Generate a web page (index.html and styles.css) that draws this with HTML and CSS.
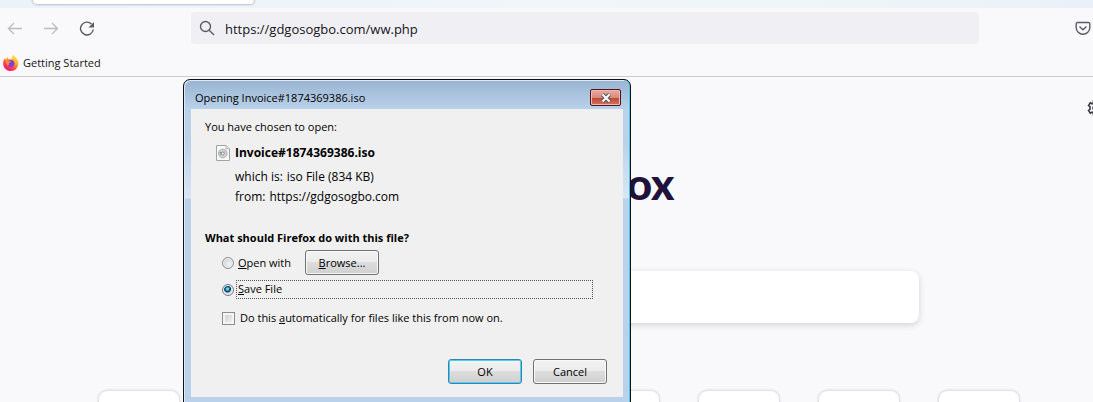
FILE: index.html
```html
<!DOCTYPE html>
<html lang="en">
<head>
<meta charset="utf-8">
<title>Opening file</title>
<link rel="stylesheet" href="styles.css">
</head>
<body>
<header class="chrome">
  <div class="tabstrip"><div class="tab"></div></div>
  <div class="navbar">
    <div class="nav-buttons">
      <button class="icon-button" aria-label="Back" disabled><svg width="16" height="16" viewBox="0 0 16 16"><path d="M15 8.500H1.500M7 3L1.500 8.500L7 14"/></svg></button>
      <button class="icon-button" aria-label="Forward" disabled><svg width="16" height="16" viewBox="0 0 16 16"><path d="M1 8.500h13.500M9 3L14.500 8.500L9 14"/></svg></button>
      <button class="icon-button" aria-label="Reload"><svg width="16" height="16" viewBox="0 0 16 16"><path d="M12.500 4A6.400 6.400 0 1 0 14.300 9.500"/><path class="solid" d="M15 2v5.500H9.500z"/></svg></button>
    </div>
    <div class="urlbar">
      <svg width="16" height="16" viewBox="0 0 16 16"><circle cx="6.500" cy="6.500" r="5"/><path d="M10.200 10.200L15 15"/></svg>
      <input class="url" type="text" aria-label="Address" value="https://gdgosogbo.com/ww.php">
    </div>
    <button class="icon-button pocket" aria-label="Save to Pocket"><svg width="16" height="16" viewBox="0 0 16 16"><path d="M2.500 2.500h11a1.300 1.300 0 0 1 1.300 1.300V7.500A6.800 6.800 0 0 1 1.200 7.500V3.800A1.300 1.300 0 0 1 2.500 2.500zM4.500 6.500L8 9.700L11.500 6.500"/></svg></button>
  </div>
  <nav class="bookmarks">
    <a class="bookmark" href="#start">
      <svg width="16" height="16" viewBox="0 0 16 16">
        <defs>
          <linearGradient id="flame" x1=".8" y1="0" x2=".2" y2="1"><stop offset="0" stop-color="#fff44f"/><stop offset=".4" stop-color="#ffa02e"/><stop offset=".7" stop-color="#ff3750"/><stop offset="1" stop-color="#e31587"/></linearGradient>
          <radialGradient id="globe"><stop offset="0" stop-color="#5a4de0"/><stop offset="1" stop-color="#9a35c8"/></radialGradient>
        </defs>
        <path fill="url(#flame)" d="M10.500 0c.8 1.500 2.500 2 3.700 4 3 5.500-.5 12-6.300 12C3 16-.3 12 .2 7.500.4 5.500 1 4.300 2 3.200l.6 1.600L4.500 2l.8 2.200c2-.4 2.800-.4 3.600.1C8.900 2.500 9.300 1 10.500 0z"/>
        <circle cx="8" cy="8.500" r="3.400" fill="url(#globe)"/>
        <path fill="#ff8a2b" d="M3 5.500c1.500-.6 2.600-.2 3.200.6l2 .2c-.3 1-1.200 1.300-2.200 1.600.2 1.500-.5 2.300-1.500 2.600C3.300 9 2.700 7 3 5.500z"/>
      </svg>
      <span>Getting Started</span>
    </a>
  </nav>
</header>

<main class="newtab">
  <button class="settings" aria-label="Personalize"><svg width="16" height="16" viewBox="0 0 16 16"><path d="M6.500 1h3v2l1.500.8 1.700-1L14.500 5.500 13 6.700v2.600l1.500 1.200-1.800 2.700-1.700-1-1.500.8v2h-3v-2L5 12.200l-1.700 1-1.800-2.700L3 9.300V6.700L1.500 5.500l1.800-2.700 1.700 1L6.500 3z"/><circle cx="8" cy="8" r="2"/></svg></button>
  <div class="wordmark">Firefox</div>
  <input class="search" type="text" aria-label="Search the web">
  <div class="tiles">
    <a class="tile" href="#t1" aria-label="Site 1"></a>
    <a class="tile" href="#t2" aria-label="Site 2"></a>
    <a class="tile" href="#t3" aria-label="Site 3"></a>
    <a class="tile" href="#t4" aria-label="Site 4"></a>
    <a class="tile" href="#t5" aria-label="Site 5"></a>
    <a class="tile" href="#t6" aria-label="Site 6"></a>
    <a class="tile" href="#t7" aria-label="Site 7"></a>
    <a class="tile" href="#t8" aria-label="Site 8"></a>
  </div>
</main>

<section class="dialog" role="dialog" aria-labelledby="dialog-title">
  <div class="titlebar">
    <span id="dialog-title">Opening Invoice#1874369386.iso</span>
    <button class="close" aria-label="Close"><svg width="12" height="10" viewBox="0 0 12 10"><path class="edge" d="M2.500 1.500L9.500 8.500M9.500 1.500L2.500 8.500"/><path class="cross" d="M2.500 1.500L9.500 8.500M9.500 1.500L2.500 8.500"/></svg></button>
  </div>
  <form class="panel">
    <p class="line">You have chosen to open:</p>
    <div class="file">
      <svg width="14" height="16" viewBox="0 0 14 16"><path d="M.5.500h9.500l3.500 3.500v11.500H.5z" fill="#fafafa" stroke="#a3a3a3"/><path d="M10 .500v3.500h3.500" fill="#e4e4e4" stroke="#b5b5b5"/><circle cx="6.800" cy="8.500" r="4.300" fill="#d3d5d8" stroke="#aaa"/><path d="M3.500 6.500l2.500 1-1.500 3z" fill="#69ad78"/><path d="M8 5l2.500 2-2.500 1z" fill="#d4bad6"/><circle cx="6.800" cy="8.500" r="1.500" fill="#fff" stroke="#858585"/></svg>
      <strong>Invoice#1874369386.iso</strong>
    </div>
    <dl class="details">
      <div class="detail"><dt>which is:</dt><dd>iso File (834 KB)</dd></div>
      <div class="detail"><dt>from:</dt><dd>https://gdgosogbo.com</dd></div>
    </dl>
    <p class="question">What should Firefox do with this file?</p>
    <div class="choice open">
      <input class="radio" type="radio" name="action" id="open"><label class="open-label" for="open"><u>O</u>pen with</label>
      <button class="button" type="button"><span><u>B</u>rowse...</span></button>
    </div>
    <div class="choice save">
      <input class="radio" type="radio" name="action" id="save" checked><label class="focused" for="save"><u>S</u>ave File</label>
    </div>
    <div class="choice always">
      <input class="check" type="checkbox" id="always"><label for="always">Do this <u>a</u>utomatically for files like this from now on.</label>
    </div>
    <div class="actions">
      <button class="button default" type="button">OK</button>
      <button class="button" type="button">Cancel</button>
    </div>
  </form>
</section>
</body>
</html>
```
FILE: styles.css
```css
* { box-sizing: border-box; }
html { overflow: hidden; }
body {
  margin: 0;
  height: 100vh;
  overflow: hidden;
  background: #f9f9fb;
  color: #000;
  font: 11px/16px "Open Sans", "Noto Sans", sans-serif;
}
button { font: inherit; color: inherit; }
svg { display: block; flex: none; }
p, dl, dd { margin: 0; }

.chrome { border-bottom: 1px solid #ccccce; color: #15141a; }
.tabstrip { height: 8px; padding-left: 33px; background: linear-gradient(90deg, #eaf2fa, #f0f6fa 50%, #eef5f9 80%, #e9f0f9); }
.tab { width: 221px; height: 4px; background: #fff; border-radius: 0 0 4px 4px; box-shadow: 0 0 2px 1px #b9bfce; }
.navbar { display: flex; align-items: center; height: 40px; padding: 0 2px 0 7px; }
.nav-buttons { display: flex; gap: 20px; width: 184px; }
.icon-button { padding: 0; border: 0; background: none; }
.icon-button svg, .urlbar svg, .settings svg { fill: none; stroke: #5b5b66; stroke-width: 1.4; }
.icon-button:disabled svg { stroke: #bdbdc3; }
.icon-button .solid { fill: #5b5b66; stroke: none; }
.urlbar { flex: 1; display: flex; align-items: center; gap: 10px; height: 32px; padding: 0 8px; background: #f0f0f4; border-radius: 4px; }
.url { flex: 1; min-width: 0; padding: 2px 0 0; border: 0; outline: 0; background: none; color: #15141a; font: 13px/20px "Open Sans", "Noto Sans", sans-serif; }
.pocket { margin-left: 96px; }
.bookmarks { height: 28px; padding: 7px 3px 5px; }
.bookmark { display: inline-flex; align-items: center; gap: 4px; color: inherit; text-decoration: none; }

.newtab { display: flex; flex-direction: column; align-items: center; margin-right: -25px; padding-top: 23px; }
.settings { align-self: flex-end; margin-right: 15px; padding: 0; border: 0; background: none; }
.settings svg { stroke: #3a3944; stroke-width: 1.6; }
.wordmark { width: 231px; margin-top: 41px; text-align: right; color: #20123a; font: 900 44px/52px Lato, sans-serif; }
.search { width: 720px; height: 52px; margin-top: 62px; padding: 0 16px; border: 0; border-radius: 8px; background: #fff; box-shadow: 0 2px 6px rgba(58, 57, 68, .2); }
.tiles { display: flex; gap: 40px; margin-top: 68px; }
.tile { width: 80px; height: 80px; border-radius: 8px; background: #fff; box-shadow: 0 0 3px rgba(58, 57, 68, .35); }

.dialog {
  position: absolute;
  left: 183px;
  top: 79px;
  width: 448px;
  padding: 0 6px 7px;
  border: 1px solid #111;
  border-radius: 7px 7px 0 0;
  background: linear-gradient(#9ab4d1, #b9d1ea 29px, #b9d1ea 60px, #dae6f4 118px, #b9d1ea 119px);
  box-shadow: inset -1px 0 #49c6e8, inset 1px 1px #dce9f6;
}
.titlebar { display: flex; align-items: center; justify-content: space-between; height: 29px; padding: 6px 3px 0 5px; }
.close { display: grid; place-items: center; width: 31px; height: 17px; padding: 0; border: 1px solid #4a1720; border-radius: 2px; background: linear-gradient(#e9a99f, #dc8a7d 50%, #bd452d 50%, #d47460); box-shadow: inset 0 0 0 1px #efb9af; }
.close path { fill: none; }
.edge { stroke: #535666; stroke-width: 4; }
.cross { stroke: #fff; stroke-width: 2; }
.panel { margin: 0 1px; padding: 10px 16px 13px 14px; background: #f0f0f0; }
.file { display: flex; align-items: center; gap: 5px; margin: 10px 0 6px 11px; font-size: 12px; }
.details { padding-left: 30px; font-size: 12px; }
.detail { display: flex; gap: 4px; height: 20px; align-items: center; }
.question { margin-top: 23px; font-weight: 700; }
.choice { display: flex; align-items: center; padding-left: 17px; }
.open-label { width: 67px; margin-left: 4px; }
.open { margin-top: 4px; }
.radio, .check { appearance: none; flex: none; margin: 0; }
.radio { width: 12px; height: 12px; border: 1px solid #8e8f8f; border-radius: 50%; background: radial-gradient(circle at 60% 60%, #f4f4f4, #cfd2d6 70%); box-shadow: inset 0 0 0 1px #f4f4f4; }
.radio:checked { border-color: #6b7f8c; background: radial-gradient(circle at 45% 40%, #6cd4f5 0 1px, #126f9f 2px, #0b3552 3px, #d4dde3 4px); }
.focused { flex: 1; height: 19px; margin: 0 14px 0 2px; padding: 0 1px; border: 1px dotted #555; }
.save { margin-top: 5px; }
.always { margin-top: 11px; }
.check { width: 13px; height: 13px; margin-right: 5px; border: 1px solid #8e8f8f; background: linear-gradient(135deg, #c8ccd2, #f5f5f5); box-shadow: inset 0 0 0 2px #f4f4f4; }
.button { width: 74px; height: 25px; padding: 0; border: 1px solid #707070; border-radius: 3px; background: linear-gradient(#f3f3f3, #ebebeb 50%, #dddddd 50%, #cfcfcf); box-shadow: inset 0 0 0 1px #fafafa; }
.default { border-color: #3c7fb1; box-shadow: inset 0 0 0 1px #48d0f5; }
.actions { display: flex; justify-content: flex-end; gap: 11px; margin-top: 33px; }
```
